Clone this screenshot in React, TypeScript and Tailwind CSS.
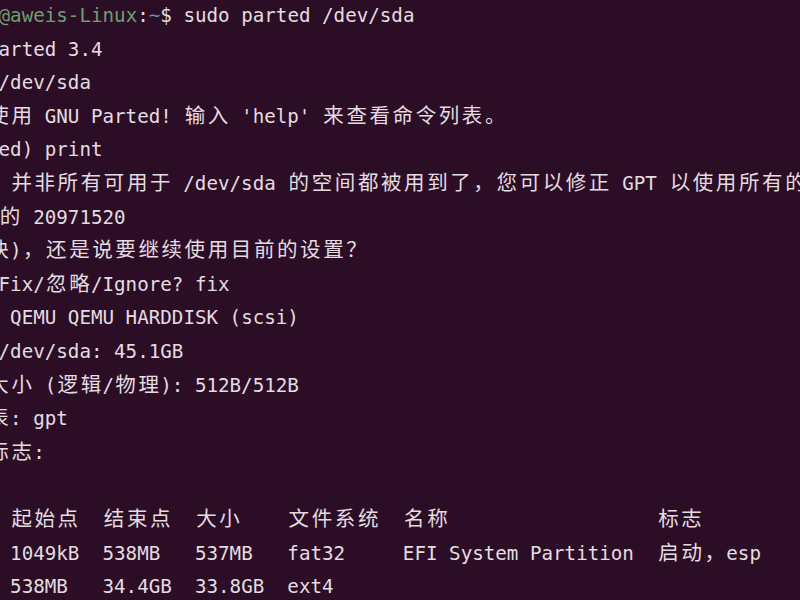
import React from "react";

const isWide = (ch: string) => {
  const c = ch.codePointAt(0) || 0;
  return (c >= 0x2e80 && c <= 0x9fff) || (c >= 0xff00 && c <= 0xffef) || (c >= 0x3000 && c <= 0x303f);
};

function renderText(s: string, keyPrefix: string) {
  const out: React.ReactNode[] = [];
  let buf = "";
  let i = 0;
  const flush = () => {
    if (buf) {
      out.push(<span key={keyPrefix + "t" + i++}>{buf}</span>);
      buf = "";
    }
  };
  for (const ch of Array.from(s)) {
    if (isWide(ch)) {
      flush();
      out.push(
        <span
          key={keyPrefix + "w" + i++}
          className="inline-block w-[23.1px] text-center text-[20.5px] leading-[20px] font-['Noto_Sans_CJK_SC',sans-serif]"
        >
          {ch}
        </span>
      );
    } else {
      buf += ch;
    }
  }
  flush();
  return out;
}

const lines: string[] = [
  "",
  " arted 3.4",
  " /dev/sda",
  "使用 GNU Parted! 输入 'help' 来查看命令列表。",
  " ed) print",
  ": 并非所有可用于 /dev/sda 的空间都被用到了，您可以修正 GPT 以使用所有的空间",
  " 的 20971520",
  "块)，还是说要继续使用目前的设置？",
  " Fix/忽略/Ignore? fix",
  ": QEMU QEMU HARDDISK (scsi)",
  " /dev/sda: 45.1GB",
  "大小 (逻辑/物理): 512B/512B",
  "表: gpt",
  "标志:",
  "",
  "  起始点  结束点  大小    文件系统  名称                  标志",
  "  1049kB  538MB   537MB   fat32     EFI System Partition  启动，esp",
  "  538MB   34.4GB  33.8GB  ext4",
];

export default function App() {
  return (
    <div className="w-[800px] h-[600px] overflow-hidden bg-[#2b0e25]">
      <div className="ml-[-13px] mt-[-1px] flex flex-col text-[19.2px] text-[#e4dce1] font-['DejaVu_Sans_Mono','Noto_Sans_CJK_SC',monospace] whitespace-pre">
        {lines.map((l, idx) => (
          <div key={idx} className="h-[33.6px] leading-[33.6px] shrink-0">
            {idx === 0 ? (
              <>
                <span> </span>
                <span className="text-[#6f9e72]">@aweis-Linux</span>
                <span>:</span>
                <span className="text-[#6a8cb4]">~</span>
                <span>$ sudo parted /dev/sda</span>
              </>
            ) : (
              renderText(l, "l" + idx)
            )}
          </div>
        ))}
      </div>
    </div>
  );
}
